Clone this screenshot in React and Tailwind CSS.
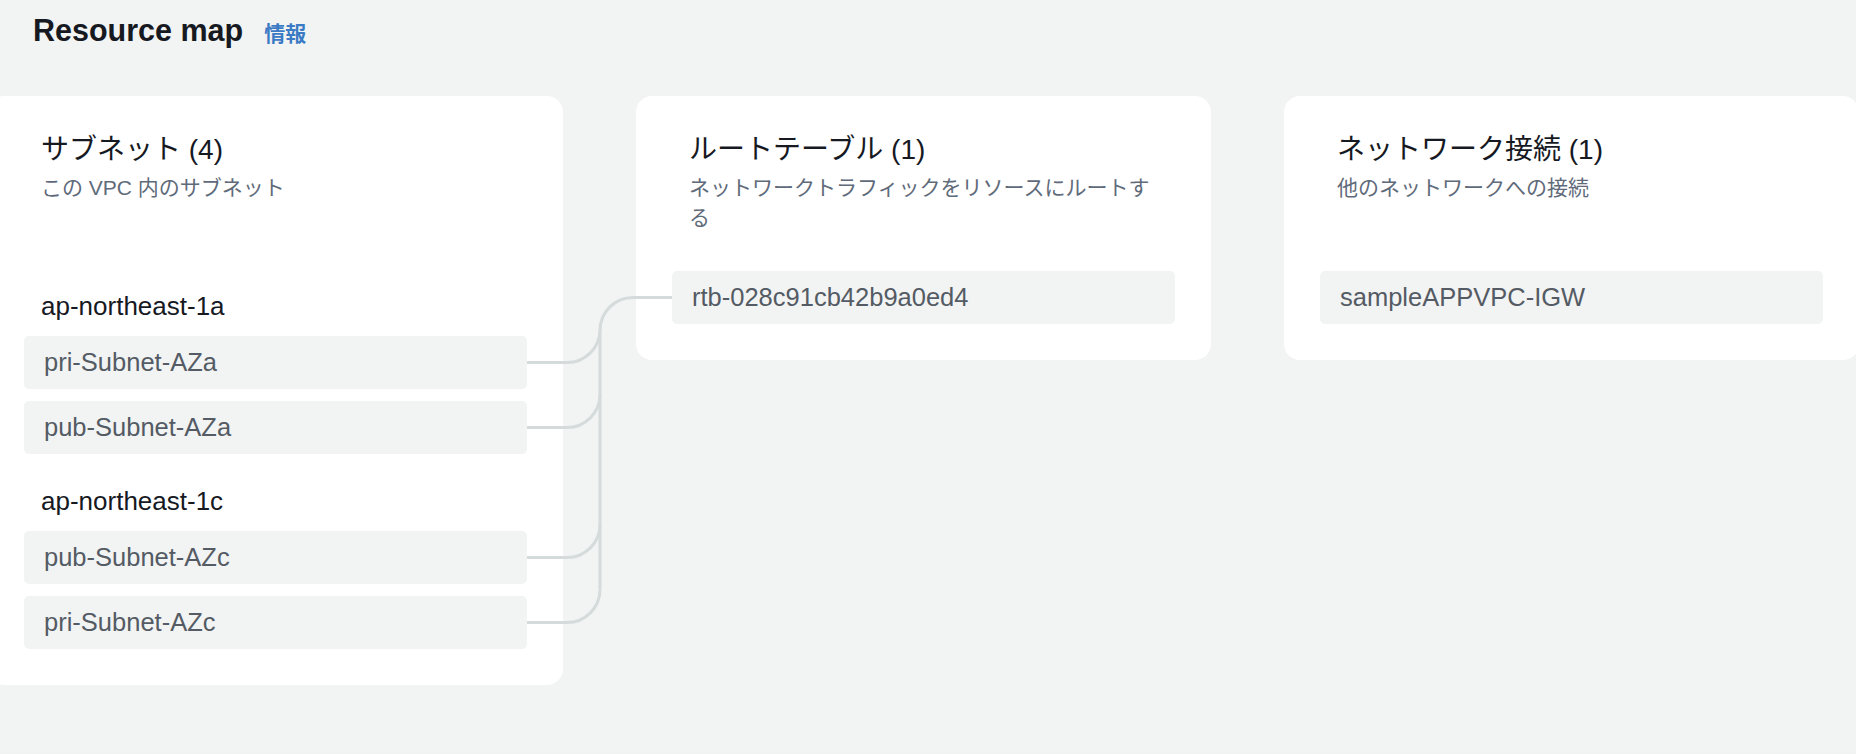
import React from "react";

const subnetGroups = [
  { zone: "ap-northeast-1a", items: ["pri-Subnet-AZa", "pub-Subnet-AZa"] },
  { zone: "ap-northeast-1c", items: ["pub-Subnet-AZc", "pri-Subnet-AZc"] },
];

const Item = ({ children }) => (
  <div className="flex h-[53px] items-center rounded-[5px] bg-[#f2f3f3] px-[20px] text-[25.5px] text-[#545b64]">
    {children}
  </div>
);

const Card = ({ title, subtitle, children }) => (
  <div className="w-[575px] shrink-0 rounded-[16px] bg-white px-[36px] pt-[36px] pb-[36px]">
    <div className="h-[139px] px-[17px]">
      <h3 className="text-[28px] font-normal leading-[36px] text-[#16191f]">{title}</h3>
      <p className="mt-[5px] text-[21px] leading-[30px] text-[#5f6b7a]">{subtitle}</p>
    </div>
    {children}
  </div>
);

// connector lines between subnets and the route table
const Connectors = () => {
  const x = 600;
  const r = 33;
  const rtbY = 297.5;
  const ys = [362.5, 427.5, 557.5, 622.5];
  return (
    <svg
      className="pointer-events-none absolute left-0 top-0"
      width="1856"
      height="754"
      viewBox="0 0 1856 754"
      fill="none"
      stroke="#d5dbdb"
      strokeWidth="3"
    >
      <path d={`M ${x} ${rtbY + r} A ${r} ${r} 0 0 1 ${x + r} ${rtbY} H 672`} />
      <path d={`M ${x} ${rtbY + r} V ${ys[3] - r}`} />
      {ys.map((y) => (
        <path key={y} d={`M 527 ${y} H ${x - r} A ${r} ${r} 0 0 0 ${x} ${y - r}`} />
      ))}
    </svg>
  );
};

export default function App() {
  return (
    <div className="relative h-[754px] w-full overflow-hidden bg-[#f2f3f3] font-['Liberation_Sans','Noto_Sans_CJK_JP',sans-serif]">
      {/* ── Header ───────────────────────────── */}
      <div className="flex h-[96px] items-baseline px-[33px] pt-[12px]">
        <h2 className="text-[30.5px] font-bold leading-[36px] text-[#16191f]">Resource map</h2>
        <a className="ml-[21px] text-[21px] font-bold text-[#3b7ac4]">情報</a>
      </div>

      {/* ── Map columns ──────────────────────── */}
      <div className="-ml-[12px] flex items-start gap-[73px]">
        <Card title="サブネット (4)" subtitle="この VPC 内のサブネット">
          <div className="flex flex-col gap-[12px]">
            {subnetGroups.map((g) => (
              <div key={g.zone} className="pt-[20px]">
                <div className="mb-[15px] px-[17px] text-[26px] leading-[30px] text-[#16191f]">{g.zone}</div>
                <div className="flex flex-col gap-[12px]">
                  {g.items.map((name) => (
                    <Item key={name}>{name}</Item>
                  ))}
                </div>
              </div>
            ))}
          </div>
        </Card>

        <Card title="ルートテーブル (1)" subtitle="ネットワークトラフィックをリソースにルートする">
          <Item>rtb-028c91cb42b9a0ed4</Item>
        </Card>

        <Card title="ネットワーク接続 (1)" subtitle="他のネットワークへの接続">
          <Item>sampleAPPVPC-IGW</Item>
        </Card>
      </div>

      <Connectors />
    </div>
  );
}
